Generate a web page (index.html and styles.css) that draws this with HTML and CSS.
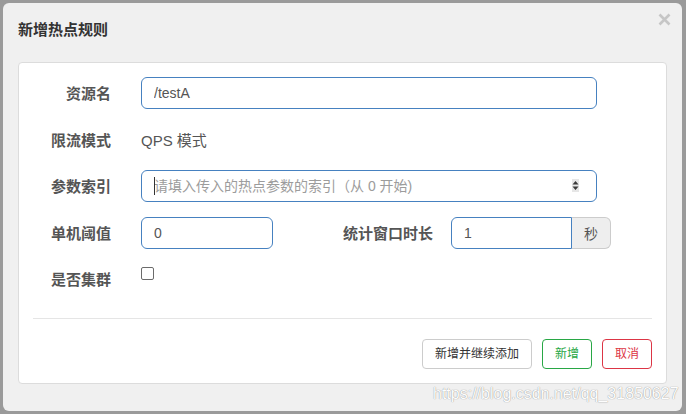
FILE: index.html
```html
<!DOCTYPE html>
<html lang="zh-CN">
<head>
<meta charset="utf-8">
<title>新增热点规则</title>
<link rel="stylesheet" href="styles.css">
</head>
<body>
<div class="dialog">
  <div class="dialog-header">
    <h4 class="dialog-title">新增热点规则</h4>
    <span class="close" aria-label="关闭">
      <svg width="13" height="13" viewBox="0 0 13 13"><path d="M1.5 1.5 L11.5 11.5 M11.5 1.5 L1.5 11.5" stroke="#c6c6c6" stroke-width="2.6" stroke-linecap="butt" fill="none"/></svg>
    </span>
  </div>
  <div class="panel">
    <div class="form">
      <div class="row">
        <label class="label">资源名</label>
        <input class="input wide" type="text" value="/testA">
      </div>
      <div class="row">
        <label class="label">限流模式</label>
        <span class="static">QPS 模式</span>
      </div>
      <div class="row">
        <label class="label">参数索引</label>
        <div class="num-wrap">
          <input class="input wide" type="text" placeholder="请填入传入的热点参数的索引（从 0 开始)">
          <span class="caret"></span>
          <span class="spinner">
            <svg width="7" height="13" viewBox="0 0 7 13"><path d="M3.5 2 L6.5 5.5 L0.5 5.5 Z M0.5 7.5 L6.5 7.5 L3.5 11 Z" fill="#3a3a3a"/></svg>
          </span>
        </div>
      </div>
      <div class="row">
        <label class="label">单机阈值</label>
        <input class="input short" type="text" value="0">
        <label class="label label-inline">统计窗口时长</label>
        <div class="group">
          <input class="input group-input" type="text" value="1">
          <span class="addon">秒</span>
        </div>
      </div>
      <div class="row">
        <label class="label">是否集群</label>
        <input class="check" type="checkbox">
      </div>
    </div>
    <hr class="divider">
    <div class="actions">
      <button class="btn btn-default">新增并继续添加</button>
      <button class="btn btn-success">新增</button>
      <button class="btn btn-danger">取消</button>
    </div>
  </div>
  <div class="watermark">https://blog.csdn.net/qq_31850627</div>
</div>
</body>
</html>
```
FILE: styles.css
```css
* { box-sizing: border-box; }

html, body {
  margin: 0;
  padding: 0;
  width: 686px;
  height: 414px;
  overflow: hidden;
  background: #9a9a9a;
  font-family: "Liberation Sans", "Noto Sans CJK SC", sans-serif;
}

.dialog {
  position: relative;
  width: 679px;
  height: 408px;
  margin: 3px 4px 0 3px;
  background: #f0f0f0;
  border-radius: 6px;
}

.dialog-header {
  padding: 17px 15px 22px;
}

.dialog-title {
  margin: 0;
  font-size: 15px;
  line-height: 20px;
  font-weight: bold;
  color: #333;
}

.close {
  position: absolute;
  top: 10px;
  right: 11px;
  width: 13px;
  height: 13px;
  display: block;
}
.close svg { display: block; }

.panel {
  margin: 0 15px;
  background: #fff;
  border: 1px solid #dcdcdc;
  border-radius: 4px;
}

.form {
  padding-top: 14px;
  display: flex;
  flex-direction: column;
  gap: 14.5px;
}

.row {
  display: flex;
  align-items: flex-start;
  height: 32px;
}

.label {
  width: 92px;
  flex: none;
  margin-right: 30px;
  padding-top: 7px;
  line-height: 20px;
  font-size: 15px;
  font-weight: bold;
  color: #555;
  text-align: right;
}

.label-inline {
  width: auto;
  margin-left: 70px;
  margin-right: 18px;
}

.static {
  padding-top: 7px;
  line-height: 20px;
  font-size: 15px;
  color: #555;
}

.input {
  height: 32px;
  border: 1px solid #4681c0;
  border-radius: 6px;
  padding: 0 12px;
  font-family: inherit;
  font-size: 14px;
  color: #555;
  background: #fff;
  outline: none;
}
.input::placeholder { color: #9c9c9c; }

.wide { width: 456px; }
.short { width: 132px; }

.num-wrap {
  position: relative;
  width: 456px;
}
.num-wrap .input { width: 100%; }

.caret {
  position: absolute;
  left: 13px;
  top: 7px;
  width: 1px;
  height: 18px;
  background: #333;
}

.spinner {
  position: absolute;
  right: 18px;
  top: 9px;
  width: 7px;
  height: 13px;
  background: #e6e6e6;
}
.spinner svg { display: block; }

.group {
  display: flex;
}
.group-input {
  width: 121px;
  border-radius: 6px 0 0 6px;
}
.addon {
  width: 39px;
  height: 32px;
  display: flex;
  align-items: center;
  justify-content: center;
  background: #eee;
  border: 1px solid #ccc;
  border-left: none;
  border-radius: 0 6px 6px 0;
  font-size: 14px;
  color: #555;
}

.check {
  appearance: none;
  -webkit-appearance: none;
  margin: 4px 0 0;
  width: 13px;
  height: 13px;
  border: 1px solid #6b6b6b;
  border-radius: 2px;
  background: #fff;
}

.divider {
  margin: 23px 14px 0;
  border: none;
  border-top: 1px solid #e5e5e5;
  height: 0;
}

.actions {
  display: flex;
  justify-content: flex-end;
  gap: 10px;
  margin-top: 20px;
  padding: 0 14px 14px;
}

.btn {
  height: 30px;
  padding: 0 12px;
  font-family: inherit;
  font-size: 12px;
  line-height: 28px;
  background: #fff;
  border: 1px solid #ccc;
  border-radius: 4px;
  color: #333;
}
.btn-success {
  border-color: #28a745;
  color: #28a745;
}
.btn-danger {
  border-color: #dc3545;
  color: #dc3545;
}

.watermark {
  position: absolute;
  left: 430px;
  top: 382px;
  font-size: 16px;
  line-height: 18px;
  color: #fdfdfd;
  text-shadow: 0 0 1px rgba(0, 0, 0, 0.35), 0 0 1px rgba(0, 0, 0, 0.2);
  white-space: nowrap;
}
```
